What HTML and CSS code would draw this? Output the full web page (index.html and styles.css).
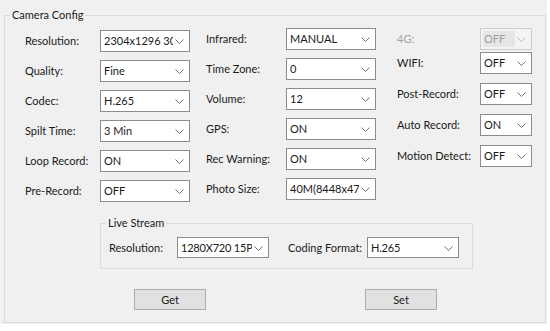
FILE: index.html
```html
<!DOCTYPE html>
<html>
<head>
<meta charset="utf-8">
<link rel="stylesheet" href="styles.css">
</head>
<body>
<div class="panel">
  <div class="group">
    <span class="group-title">Camera Config</span>
    <div class="cols">
      <div class="col col1">
        <div class="field"><span class="lbl">Resolution:</span><div class="select"><span class="val">2304x1296 30fps</span><svg class="chev" width="9" height="5" viewBox="0 0 9 5"><polyline points="0.5,0.5 4.5,4.5 8.5,0.5"/></svg></div></div>
        <div class="field"><span class="lbl">Quality:</span><div class="select"><span class="val">Fine</span><svg class="chev" width="9" height="5" viewBox="0 0 9 5"><polyline points="0.5,0.5 4.5,4.5 8.5,0.5"/></svg></div></div>
        <div class="field"><span class="lbl">Codec:</span><div class="select"><span class="val">H.265</span><svg class="chev" width="9" height="5" viewBox="0 0 9 5"><polyline points="0.5,0.5 4.5,4.5 8.5,0.5"/></svg></div></div>
        <div class="field"><span class="lbl">Spilt Time:</span><div class="select"><span class="val">3 Min</span><svg class="chev" width="9" height="5" viewBox="0 0 9 5"><polyline points="0.5,0.5 4.5,4.5 8.5,0.5"/></svg></div></div>
        <div class="field"><span class="lbl">Loop Record:</span><div class="select"><span class="val">ON</span><svg class="chev" width="9" height="5" viewBox="0 0 9 5"><polyline points="0.5,0.5 4.5,4.5 8.5,0.5"/></svg></div></div>
        <div class="field"><span class="lbl">Pre-Record:</span><div class="select"><span class="val">OFF</span><svg class="chev" width="9" height="5" viewBox="0 0 9 5"><polyline points="0.5,0.5 4.5,4.5 8.5,0.5"/></svg></div></div>
      </div>
      <div class="col col2">
        <div class="field"><span class="lbl">Infrared:</span><div class="select"><span class="val">MANUAL</span><svg class="chev" width="9" height="5" viewBox="0 0 9 5"><polyline points="0.5,0.5 4.5,4.5 8.5,0.5"/></svg></div></div>
        <div class="field"><span class="lbl">Time Zone:</span><div class="select"><span class="val">0</span><svg class="chev" width="9" height="5" viewBox="0 0 9 5"><polyline points="0.5,0.5 4.5,4.5 8.5,0.5"/></svg></div></div>
        <div class="field"><span class="lbl">Volume:</span><div class="select"><span class="val">12</span><svg class="chev" width="9" height="5" viewBox="0 0 9 5"><polyline points="0.5,0.5 4.5,4.5 8.5,0.5"/></svg></div></div>
        <div class="field"><span class="lbl">GPS:</span><div class="select"><span class="val">ON</span><svg class="chev" width="9" height="5" viewBox="0 0 9 5"><polyline points="0.5,0.5 4.5,4.5 8.5,0.5"/></svg></div></div>
        <div class="field"><span class="lbl">Rec Warning:</span><div class="select"><span class="val">ON</span><svg class="chev" width="9" height="5" viewBox="0 0 9 5"><polyline points="0.5,0.5 4.5,4.5 8.5,0.5"/></svg></div></div>
        <div class="field"><span class="lbl">Photo Size:</span><div class="select"><span class="val">40M(8448x4752)</span><svg class="chev" width="9" height="5" viewBox="0 0 9 5"><polyline points="0.5,0.5 4.5,4.5 8.5,0.5"/></svg></div></div>
      </div>
      <div class="col col3">
        <div class="field first"><span class="lbl disabled">4G:</span><div class="select small off"><span class="val">OFF</span><svg class="chev" width="9" height="5" viewBox="0 0 9 5"><polyline points="0.5,0.5 4.5,4.5 8.5,0.5"/></svg></div></div>
        <div class="field"><span class="lbl">WIFI:</span><div class="select small"><span class="val">OFF</span><svg class="chev" width="9" height="5" viewBox="0 0 9 5"><polyline points="0.5,0.5 4.5,4.5 8.5,0.5"/></svg></div></div>
        <div class="field"><span class="lbl">Post-Record:</span><div class="select small"><span class="val">OFF</span><svg class="chev" width="9" height="5" viewBox="0 0 9 5"><polyline points="0.5,0.5 4.5,4.5 8.5,0.5"/></svg></div></div>
        <div class="field"><span class="lbl">Auto Record:</span><div class="select small"><span class="val">ON</span><svg class="chev" width="9" height="5" viewBox="0 0 9 5"><polyline points="0.5,0.5 4.5,4.5 8.5,0.5"/></svg></div></div>
        <div class="field"><span class="lbl">Motion Detect:</span><div class="select small"><span class="val">OFF</span><svg class="chev" width="9" height="5" viewBox="0 0 9 5"><polyline points="0.5,0.5 4.5,4.5 8.5,0.5"/></svg></div></div>
      </div>
    </div>
    <div class="live">
      <span class="group-title live-title">Live Stream</span>
      <div class="live-row">
        <span class="lbl live-lbl1">Resolution:</span>
        <div class="select live-sel"><span class="val">1280X720 15P</span><svg class="chev" width="9" height="5" viewBox="0 0 9 5"><polyline points="0.5,0.5 4.5,4.5 8.5,0.5"/></svg></div>
        <span class="lbl live-lbl2">Coding Format:</span>
        <div class="select live-sel"><span class="val">H.265</span><svg class="chev" width="9" height="5" viewBox="0 0 9 5"><polyline points="0.5,0.5 4.5,4.5 8.5,0.5"/></svg></div>
      </div>
    </div>
    <div class="buttons">
      <div class="btn">Get</div>
      <div class="btn">Set</div>
    </div>
  </div>
</div>
</body>
</html>
```
FILE: styles.css
```css
* { box-sizing: border-box; }
html, body {
  margin: 0;
  padding: 0;
  background: #ffffff;
}
body {
  font-family: Lato, "Open Sans", sans-serif;
  font-size: 11px;
  color: #1a1a1a;
}
.panel {
  width: 547px;
  height: 324px;
  background: #f0f0f0;
  padding-top: 15px;
  padding-left: 4px;
  overflow: hidden;
}
.group {
  position: relative;
  width: 542px;
  height: 308px;
  border: 1px solid #dcdcdc;
}
.group-title {
  position: absolute;
  left: 5px;
  top: -8px;
  line-height: 14px;
  padding: 0 2px;
  background: #f0f0f0;
}
.cols {
  display: flex;
  align-items: flex-start;
  padding-top: 12px;
  padding-left: 20px;
  height: 186px;
}
.col {
  display: flex;
  flex-direction: column;
  gap: 8px;
}
.col1 { margin-top: 2px; }
.col2 { margin-left: 16px; }
.col3 { margin-left: 21px; gap: 9px; }
.col3 .first { margin-bottom: -7px; }
.field {
  display: flex;
  align-items: center;
  height: 22px;
}
.lbl {
  white-space: nowrap;
  line-height: 14px;
}
.col1 .lbl { width: 75px; }
.col2 .lbl { width: 80px; }
.col3 .lbl { width: 83px; }
.lbl.disabled { color: #a3a3a3; }
.select {
  display: flex;
  align-items: center;
  width: 90px;
  height: 22px;
  border: 1px solid #8c8c8c;
  background: #ffffff;
}
.select.small { width: 52px; }
.val {
  flex: 1;
  overflow: hidden;
  white-space: nowrap;
  padding-left: 3px;
  line-height: 14px;
}
.chev {
  flex: none;
  margin: 1px 5px 0 2px;
  fill: none;
  stroke: #707070;
  stroke-width: 1;
}
.select.off {
  border-color: #cccccc;
  background: #f4f4f4;
}
.select.off .val {
  color: #a0a0a0;
  background: #e6e6e6;
  margin: 2px 0 2px 2px;
  padding-left: 1px;
  height: 16px;
  line-height: 16px;
}
.select.off .chev { stroke: #bdbdbd; }
.live {
  position: relative;
  margin-top: 21px;
  margin-left: 95px;
  width: 373px;
  height: 46px;
  border: 1px solid #dcdcdc;
}
.live-row {
  display: flex;
  align-items: center;
  padding-top: 13px;
  padding-left: 8px;
}
.live-lbl1 { width: 68px; }
.live-lbl2 { width: 79px; margin-left: 19px; }
.live-sel { width: 92px; height: 21px; }
.live-sel .val { letter-spacing: -0.2px; }
.buttons {
  display: flex;
  gap: 159px;
  margin-top: 20px;
  padding-left: 129px;
}
.btn {
  width: 72px;
  height: 21px;
  border: 1px solid #adadad;
  background: #e1e1e1;
  display: flex;
  align-items: center;
  justify-content: center;
  line-height: 14px;
}
```
